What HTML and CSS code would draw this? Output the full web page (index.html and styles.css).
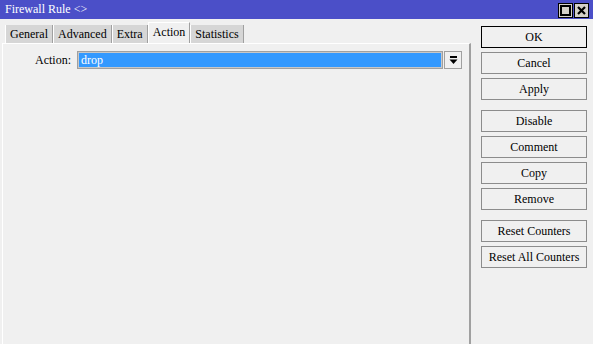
FILE: index.html
```html
<!DOCTYPE html>
<html lang="en">
<head>
	<meta charset="UTF-8">
	<title>Firewall Rule</title>
	<link rel="stylesheet" href="styles.css">
</head>
<body>
	<div class="window">
		<div class="titlebar">
			<span class="title">Firewall Rule &lt;&gt;</span>
			<div class="winbtns">
				<span class="winbtn"><svg width="11" height="11" viewBox="0 0 11 11"><rect x="1" y="1" width="9" height="9" fill="none" stroke="#000" stroke-width="2"/></svg></span>
				<span class="winbtn"><svg width="11" height="11" viewBox="0 0 11 11"><path d="M2 2L9 9M9 2L2 9" stroke="#000" stroke-width="2.2"/></svg></span>
			</div>
		</div>
		<div class="body">
			<div class="main">
				<div class="tabs">
					<span class="tab">General</span>
					<span class="tab">Advanced</span>
					<span class="tab">Extra</span>
					<span class="tab on">Action</span>
					<span class="tab">Statistics</span>
				</div>
				<div class="panel">
					<div class="row">
						<label class="lbl">Action:</label>
						<div class="field">drop</div>
						<span class="drop"><svg width="9" height="9" viewBox="0 0 9 9"><rect x="1" y="0" width="7" height="2" fill="#000"/><path d="M0.5 3.5H8.5L4.5 8z" fill="#000"/></svg></span>
					</div>
				</div>
			</div>
			<div class="side">
				<a class="btn def" href="javascript:;">OK</a>
				<a class="btn" href="javascript:;">Cancel</a>
				<a class="btn" href="javascript:;">Apply</a>
				<a class="btn gap" href="javascript:;">Disable</a>
				<a class="btn" href="javascript:;">Comment</a>
				<a class="btn" href="javascript:;">Copy</a>
				<a class="btn" href="javascript:;">Remove</a>
				<a class="btn gap" href="javascript:;">Reset Counters</a>
				<a class="btn" href="javascript:;">Reset All Counters</a>
			</div>
		</div>
	</div>
</body>
</html>
```

FILE: styles.css
```css
html,body{margin:0;padding:0;}
body{background:#f0f0f0;font-family:"Liberation Serif","Times New Roman",serif;font-size:12px;color:#000;}
.window{width:593px;height:344px;display:flex;flex-direction:column;overflow:hidden;}
.titlebar{height:19px;background:#4b4fc8;display:flex;align-items:center;justify-content:space-between;padding:0 4px 0 5px;}
.title{color:#fff;font-size:12px;}
.winbtns{display:flex;gap:1px;margin-top:1px;}
.winbtn{width:13px;height:13px;background:#d4d0c8;border:1px solid #000;display:flex;align-items:center;justify-content:center;}
.body{flex:1;display:flex;}
.main{flex:1;display:flex;flex-direction:column;padding:3px 0 0 2px;}
.tabs{display:flex;align-items:flex-end;height:21px;padding-left:3px;}
.tab{height:18px;line-height:18px;padding:0 4px;background:#d6d6d6;border-left:1px solid #fff;border-right:1px solid #a0a0a0;}
.tab.on{height:20px;line-height:19px;background:#f0f0f0;border-top:1px solid #fff;border-right:1px solid #a0a0a0;}
.panel{flex:1;border-top:1px solid #fff;border-left:1px solid #fff;border-right:2px solid #a0a0a0;padding-top:7px;}
.row{display:flex;align-items:center;}
.lbl{width:68px;text-align:right;margin-right:6px;}
.field{width:358px;height:14px;line-height:14px;border:2px solid #c8c8c8;outline:1px solid #a0a0a0;outline-offset:-1px;background:#3399ff;color:#fff;padding:0 2px;}
.drop{width:16px;height:16px;margin-left:1px;border:1px solid #a0a0a0;background:#f0f0f0;display:flex;align-items:center;justify-content:center;}
.side{width:106px;display:flex;flex-direction:column;gap:4px;padding:7px 6px 0 10px;}
.btn{display:block;height:20px;line-height:20px;text-align:center;color:#000;text-decoration:none;border:1px solid #8c8c8c;background:#f0f0f0;}
.btn.def{border:1px solid #000;}
.btn.gap{margin-top:6px;}
```
